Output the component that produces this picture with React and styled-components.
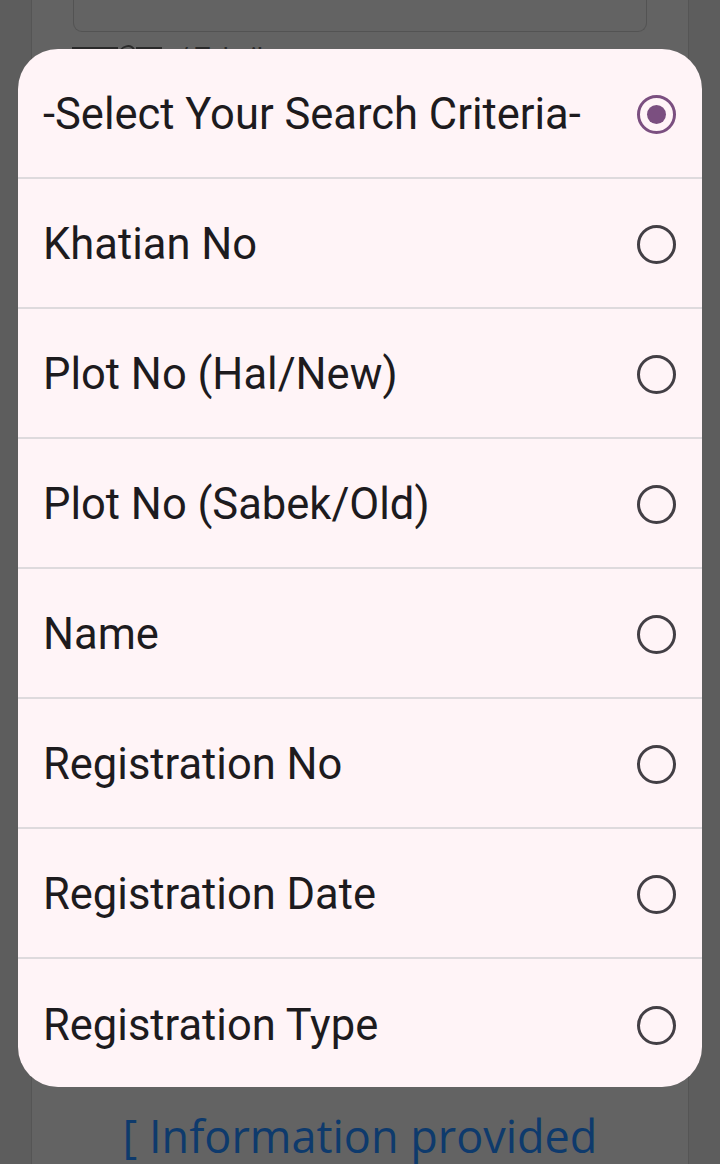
import React from "react";
import styled, { createGlobalStyle } from "styled-components";

const GlobalStyle = createGlobalStyle`
  html, body { margin: 0; padding: 0; }
  body {
    background: #5d5d5d;
    font-family: Roboto, "Noto Sans", sans-serif;
    overflow: hidden;
  }
`;

const Page = styled.div`
  position: relative;
  height: 1164px;
  display: flex;
  padding-left: 31px;
`;

const Card = styled.div`
  width: 656px;
  height: 1164px;
  background: #636363;
  border-left: 1px solid #555;
  border-right: 1px solid #555;
  display: flex;
  flex-direction: column;
`;

const InputBox = styled.div`
  margin: -20px 41px 0 41px;
  height: 51px;
  border: 1.5px solid #535353;
  border-top: none;
  border-radius: 0 0 9px 9px;
`;

const LabelRow = styled.div`
  display: flex;
  align-items: flex-start;
  gap: 6px;
  margin: 10px 0 0 40px;
  height: 30px;
  color: #2a2a2a;
  font-family: Roboto, sans-serif;
  font-size: 26px;
  line-height: 30px;
`;

const Spacer = styled.div`
  flex: 1;
`;

const InfoText = styled.div`
  text-align: center;
  color: #0e3a6c;
  font-family: "Open Sans", "Noto Sans", sans-serif;
  font-size: 45px;
  line-height: 60px;
  margin-bottom: -2px;
  white-space: nowrap;
`;

const Dialog = styled.div`
  position: absolute;
  top: 49px;
  left: 18px;
  width: 684px;
  height: 1038px;
  background: #fff4f7;
  border-radius: 40px;
  overflow: hidden;
  display: flex;
  flex-direction: column;
`;

const Row = styled.div`
  flex: 0 0 130px;
  box-sizing: border-box;
  display: flex;
  align-items: center;
  justify-content: space-between;
  padding: 0 26px 0 25px;
  border-bottom: ${(p) => (p.$last ? "none" : "2px solid #dedadd")};
`;

const Label = styled.span`
  font-family: Roboto, sans-serif;
  font-size: 43.5px;
  color: #1d1b1e;
  white-space: nowrap;
  margin-top: 2px;
`;

const Radio = styled.span`
  box-sizing: border-box;
  width: 39px;
  height: 39px;
  border-radius: 50%;
  border: 3.5px solid ${(p) => (p.$checked ? "#7b4f80" : "#433f45")};
  display: flex;
  align-items: center;
  justify-content: center;
  margin-top: 2px;
  &::after {
    content: "";
    display: ${(p) => (p.$checked ? "block" : "none")};
    width: 19px;
    height: 19px;
    border-radius: 50%;
    background: #7b4f80;
  }
`;

const options = [
  "-Select Your Search Criteria-",
  "Khatian No",
  "Plot No (Hal/New)",
  "Plot No (Sabek/Old)",
  "Name",
  "Registration No",
  "Registration Date",
  "Registration Type",
];

export default function App() {
  return (
    <>
      <GlobalStyle />
      <Page>
        <Card>
          <InputBox />
          <LabelRow>
            <svg width="100" height="30" viewBox="0 0 100 30">
              <path d="M0 6 H46 M64 6 H90" stroke="#2a2a2a" strokeWidth="2" fill="none" />
              <path d="M48 14 C46 3 62 1 62 9" stroke="#2a2a2a" strokeWidth="2" fill="none" />
            </svg>
            <span>/ Tehsil</span>
          </LabelRow>
          <Spacer />
          <InfoText>[ Information provided</InfoText>
        </Card>
        <Dialog>
          {options.map((o, i) => (
            <Row key={o} $last={i === options.length - 1}>
              <Label>{o}</Label>
              <Radio $checked={i === 0} />
            </Row>
          ))}
        </Dialog>
      </Page>
    </>
  );
}
